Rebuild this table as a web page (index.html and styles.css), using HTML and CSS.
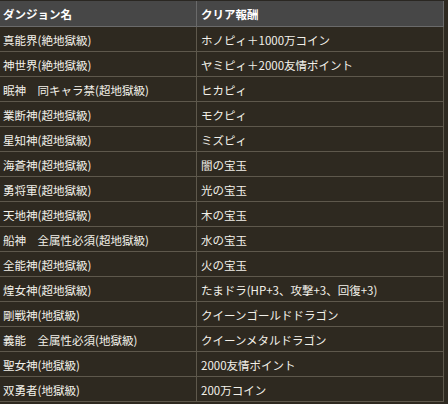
FILE: index.html
```html
<!DOCTYPE html>
<html lang="ja">
<head>
<meta charset="utf-8">
<link rel="stylesheet" href="styles.css">
</head>
<body>
<div class="table">
  <div class="row head"><div class="cell">ダンジョン名</div><div class="cell">クリア報酬</div></div>
  <div class="row"><div class="cell">真能界(絶地獄級)</div><div class="cell">ホノピィ＋1000万コイン</div></div>
  <div class="row"><div class="cell">神世界(絶地獄級)</div><div class="cell">ヤミピィ＋2000友情ポイント</div></div>
  <div class="row"><div class="cell">眠神　同キャラ禁(超地獄級)</div><div class="cell">ヒカピィ</div></div>
  <div class="row"><div class="cell">業断神(超地獄級)</div><div class="cell">モクピィ</div></div>
  <div class="row"><div class="cell">星知神(超地獄級)</div><div class="cell">ミズピィ</div></div>
  <div class="row"><div class="cell">海蒼神(超地獄級)</div><div class="cell">闇の宝玉</div></div>
  <div class="row"><div class="cell">勇将軍(超地獄級)</div><div class="cell">光の宝玉</div></div>
  <div class="row"><div class="cell">天地神(超地獄級)</div><div class="cell">木の宝玉</div></div>
  <div class="row"><div class="cell">船神　全属性必須(超地獄級)</div><div class="cell">水の宝玉</div></div>
  <div class="row"><div class="cell">全能神(超地獄級)</div><div class="cell">火の宝玉</div></div>
  <div class="row"><div class="cell">煌女神(超地獄級)</div><div class="cell">たまドラ(HP+3、攻撃+3、回復+3)</div></div>
  <div class="row"><div class="cell">剛戦神(地獄級)</div><div class="cell">クイーンゴールドドラゴン</div></div>
  <div class="row"><div class="cell">義能　全属性必須(地獄級)</div><div class="cell">クイーンメタルドラゴン</div></div>
  <div class="row"><div class="cell">聖女神(地獄級)</div><div class="cell">2000友情ポイント</div></div>
  <div class="row"><div class="cell">双勇者(地獄級)</div><div class="cell">200万コイン</div></div>
</div>
</body>
</html>
```
FILE: styles.css
```css
html, body {
  margin: 0;
  padding: 0;
  background: #2e2920;
}
body {
  width: 448px;
  height: 404px;
  overflow: hidden;
  font-family: "Noto Sans CJK JP", "Noto Sans", sans-serif;
  font-size: 11.5px;
  color: #f3f1ea;
}
.table {
  width: 444px;
}
.row {
  display: grid;
  grid-template-columns: 197px 247px;
  height: 25px;
}
.row.head {
  height: 27px;
  background: #474747;
  border-top: 1px solid #2a2722;
  box-sizing: border-box;
  font-weight: bold;
  color: #ffffff;
}
.cell {
  box-sizing: border-box;
  border-right: 1px solid #5e584c;
  border-bottom: 1px solid #5e584c;
  padding: 1px 4px 0 3px;
  display: flex;
  align-items: center;
  white-space: nowrap;
  overflow: hidden;
}
.cell + .cell {
  padding-left: 4px;
}
.head .cell {
  border-color: #6a6a6a;
}
```
